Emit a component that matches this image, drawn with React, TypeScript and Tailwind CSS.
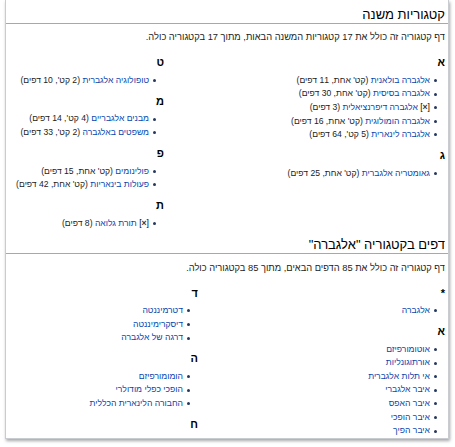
import React from 'react';

type Item = {
    title: string;
    info?: string;
    tree?: boolean;
};

type Group = {
    letter: string;
    items: Item[];
};

type Section = {
    heading: string;
    description: string;
    rightWidth: string;
    columns: Group[][];
};

const sections: Section[] = [
    {
        heading: 'קטגוריות משנה',
        description:
            'דף קטגוריה זה כולל את 17 קטגוריות המשנה הבאות, מתוך 17 בקטגוריה כולה.',
        rightWidth: 'w-[281px]',
        columns: [
            [
                {
                    letter: 'א',
                    items: [
                        { title: 'אלגברה בולאנית', info: "(קט' אחת, 11 דפים)" },
                        { title: 'אלגברה בסיסית', info: "(קט' אחת, 30 דפים)" },
                        { title: 'אלגברה דיפרנציאלית', info: '(3 דפים)', tree: true },
                        { title: 'אלגברה הומולוגית', info: "(קט' אחת, 16 דפים)" },
                        { title: 'אלגברה לינארית', info: "(5 קט', 64 דפים)" },
                    ],
                },
                {
                    letter: 'ג',
                    items: [
                        { title: 'גאומטריה אלגברית', info: "(קט' אחת, 25 דפים)" },
                    ],
                },
            ],
            [
                {
                    letter: 'ט',
                    items: [
                        { title: 'טופולוגיה אלגברית', info: "(2 קט', 10 דפים)" },
                    ],
                },
                {
                    letter: 'מ',
                    items: [
                        { title: 'מבנים אלגבריים', info: "(4 קט', 14 דפים)" },
                        { title: 'משפטים באלגברה', info: "(2 קט', 33 דפים)" },
                    ],
                },
                {
                    letter: 'פ',
                    items: [
                        { title: 'פולינומים', info: "(קט' אחת, 15 דפים)" },
                        { title: 'פעולות בינאריות', info: "(קט' אחת, 42 דפים)" },
                    ],
                },
                {
                    letter: 'ת',
                    items: [{ title: 'תורת גלואה', info: '(8 דפים)', tree: true }],
                },
            ],
        ],
    },
    {
        heading: 'דפים בקטגוריה "אלגברה"',
        description:
            'דף קטגוריה זה כולל את 85 הדפים הבאים, מתוך 85 בקטגוריה כולה.',
        rightWidth: 'w-[247px]',
        columns: [
            [
                { letter: '*', items: [{ title: 'אלגברה' }] },
                {
                    letter: 'א',
                    items: [
                        { title: 'אוטומורפיזם' },
                        { title: 'אורתוגונליות' },
                        { title: 'אי תלות אלגברית' },
                        { title: 'איבר אלגברי' },
                        { title: 'איבר האפס' },
                        { title: 'איבר הופכי' },
                        { title: 'איבר הפיך' },
                    ],
                },
            ],
            [
                {
                    letter: 'ד',
                    items: [
                        { title: 'דטרמיננטה' },
                        { title: 'דיסקרימיננטה' },
                        { title: 'דרגה של אלגברה' },
                    ],
                },
                {
                    letter: 'ה',
                    items: [
                        { title: 'הומומורפיזם' },
                        { title: 'הופכי כפלי מודולרי' },
                        { title: 'החבורה הלינארית הכללית' },
                    ],
                },
                { letter: 'ח', items: [] },
            ],
        ],
    },
];

function GroupList({ group }: { group: Group }) {
    return (
        <div>
            <h3 className="mt-[6.5px] mb-[4.5px] text-[11px] leading-[14px] font-bold text-black">
                {group.letter}
            </h3>
            <ul className="ps-[8px]">
                {group.items.map((item) => (
                    <li
                        key={item.title}
                        className="flex items-center gap-[4px] text-[8.6px] leading-[13.6px] whitespace-nowrap text-[#222]"
                    >
                        <span className="h-[3px] w-[3px] shrink-0 rounded-full bg-[#26385f]" />
                        <span>
                            {item.tree && (
                                <span className="text-black">
                                    [<b className="text-[#333]">×</b>]{' '}
                                </span>
                            )}
                            <a className="text-[#0645ad]">{item.title}</a>
                            {item.info && ` ${item.info}`}
                        </span>
                    </li>
                ))}
            </ul>
        </div>
    );
}

export default function App() {
    return (
        <div className="h-[447px] w-[455px] overflow-hidden bg-white font-['Liberation_Sans',Arial,sans-serif]">
            <div
                dir="rtl"
                className="ml-[5px] h-[439px] w-[444px] overflow-hidden border-x border-b border-[#c8ccd1] bg-white shadow-[1px_2px_3px_rgba(0,0,0,0.35)]"
            >
                {sections.map((section, i) => (
                    <section key={section.heading} className={i === 0 ? '' : 'mt-[7px]'}>
                        <h2
                            className={`border-b border-[#a2a9b1] px-[3px] text-[13px] leading-[16px] text-black ${i === 0 ? 'pt-[7px]' : ''}`}
                        >
                            {section.heading}
                        </h2>
                        <p className="mt-[7.25px] mb-[4px] px-[3px] text-[9.3px] leading-[13.5px] text-[#222]">
                            {section.description}
                        </p>
                        <div className="flex px-[3px]">
                            {section.columns.map((col, c) => (
                                <div
                                    key={c}
                                    className={c === 0 ? `${section.rightWidth} shrink-0` : 'flex-1'}
                                >
                                    {col.map((group) => (
                                        <GroupList key={group.letter} group={group} />
                                    ))}
                                </div>
                            ))}
                        </div>
                    </section>
                ))}
            </div>
        </div>
    );
}
